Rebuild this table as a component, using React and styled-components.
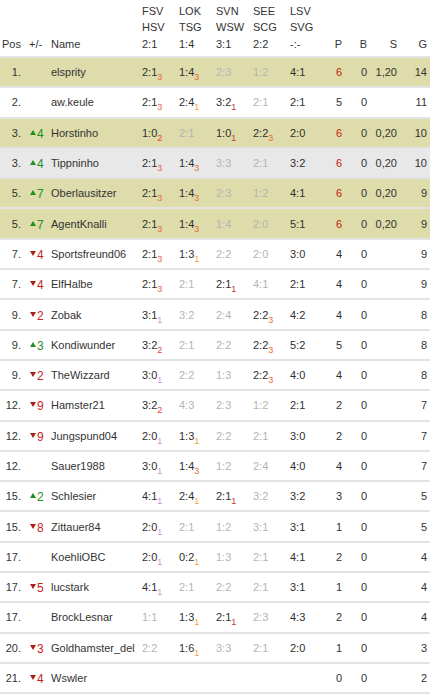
import React from "react";
import styled, { createGlobalStyle } from "styled-components";

const GlobalStyle = createGlobalStyle`
  body {
    margin: 0;
    background: #fff;
    font-family: "Liberation Sans", Arial, sans-serif;
    color: #333;
  }
`;

const games = [
  ["FSV", "HSV", "2:1"],
  ["LOK", "TSG", "1:4"],
  ["SVN", "WSW", "3:1"],
  ["SEE", "SCG", "2:2"],
  ["LSV", "SVG", "-:-"],
];

// "2:1|3" = tip with points, "2:3" = tip without points
const rows = [
  { pos: "1.", name: "elsprity", tips: ["2:1|3", "1:4|3", "2:3", "1:2", "4:1"], p: 6, b: 0, s: "1,20", g: 14, hl: "olive" },
  { pos: "2.", name: "aw.keule", tips: ["2:1|3", "2:4|1", "3:2|1", "2:1", "2:1"], p: 5, b: 0, s: "", g: 11 },
  { pos: "3.", trend: ["up", 4], name: "Horstinho", tips: ["1:0|2", "2:1", "1:0|1", "2:2|3", "2:0"], p: 6, b: 0, s: "0,20", g: 10, hl: "olive" },
  { pos: "3.", trend: ["up", 4], name: "Tippninho", tips: ["2:1|3", "1:4|3", "3:3", "2:1", "3:2"], p: 6, b: 0, s: "0,20", g: 10, hl: "grey" },
  { pos: "5.", trend: ["up", 7], name: "Oberlausitzer", tips: ["2:1|3", "1:4|3", "2:3", "1:2", "4:1"], p: 6, b: 0, s: "0,20", g: 9, hl: "olive" },
  { pos: "5.", trend: ["up", 7], name: "AgentKnalli", tips: ["2:1|3", "1:4|3", "1:4", "2:0", "5:1"], p: 6, b: 0, s: "0,20", g: 9, hl: "olive" },
  { pos: "7.", trend: ["down", 4], name: "Sportsfreund06", tips: ["2:1|3", "1:3|1", "2:2", "2:0", "3:0"], p: 4, b: 0, s: "", g: 9 },
  { pos: "7.", trend: ["down", 4], name: "ElfHalbe", tips: ["2:1|3", "2:1", "2:1|1", "4:1", "2:1"], p: 4, b: 0, s: "", g: 9 },
  { pos: "9.", trend: ["down", 2], name: "Zobak", tips: ["3:1|1", "3:2", "2:4", "2:2|3", "4:2"], p: 4, b: 0, s: "", g: 8 },
  { pos: "9.", trend: ["up", 3], name: "Kondiwunder", tips: ["3:2|2", "2:1", "2:2", "2:2|3", "5:2"], p: 5, b: 0, s: "", g: 8 },
  { pos: "9.", trend: ["down", 2], name: "TheWizzard", tips: ["3:0|1", "2:2", "1:3", "2:2|3", "4:0"], p: 4, b: 0, s: "", g: 8 },
  { pos: "12.", trend: ["down", 9], name: "Hamster21", tips: ["3:2|2", "4:3", "2:3", "1:2", "2:1"], p: 2, b: 0, s: "", g: 7 },
  { pos: "12.", trend: ["down", 9], name: "Jungspund04", tips: ["2:0|1", "1:3|1", "2:2", "2:1", "3:0"], p: 2, b: 0, s: "", g: 7 },
  { pos: "12.", name: "Sauer1988", tips: ["3:0|1", "1:4|3", "1:2", "2:4", "4:0"], p: 4, b: 0, s: "", g: 7 },
  { pos: "15.", trend: ["up", 2], name: "Schlesier", tips: ["4:1|1", "2:4|1", "2:1|1", "3:2", "3:2"], p: 3, b: 0, s: "", g: 5 },
  { pos: "15.", trend: ["down", 8], name: "Zittauer84", tips: ["2:0|1", "2:1", "1:2", "3:1", "3:1"], p: 1, b: 0, s: "", g: 5 },
  { pos: "17.", name: "KoehliOBC", tips: ["2:0|1", "0:2|1", "1:3", "2:1", "4:1"], p: 2, b: 0, s: "", g: 4 },
  { pos: "17.", trend: ["down", 5], name: "lucstark", tips: ["4:1|1", "2:1", "2:2", "2:1", "3:1"], p: 1, b: 0, s: "", g: 4 },
  { pos: "17.", name: "BrockLesnar", tips: ["1:1", "1:3|1", "2:1|1", "2:3", "4:3"], p: 2, b: 0, s: "", g: 4 },
  { pos: "20.", trend: ["down", 3], name: "Goldhamster_del", tips: ["2:2", "1:6|1", "3:3", "2:1", "2:0"], p: 1, b: 0, s: "", g: 3 },
  { pos: "21.", trend: ["down", 4], name: "Wswler", tips: ["", "", "", "", ""], p: 0, b: 0, s: "", g: 2 },
];

const subColor = (col, pts) => {
  if (pts === "3") return "#e66a42";
  if (pts === "2") return "#e23f36";
  return ["#d98ad6", "#f2a43c", "#c9392d"][col] || "#c9392d";
};

const rowBg = { olive: "#dddcaa", grey: "#e8e8e8" };

const Table = styled.table`
  width: 430px;
  border-collapse: collapse;
  table-layout: fixed;
  font-size: 11px;
`;

const Col = styled.col`
  width: ${(p) => p.$w}px;
`;

const HeadCell = styled.th`
  height: 52px;
  padding: 0 ${(p) => (p.$right ? "3px" : "0")} 4px ${(p) => p.$pl || 0}px;
  font-weight: normal;
  text-align: ${(p) => (p.$right ? "right" : "left")};
  vertical-align: bottom;
  line-height: 16.5px;
  white-space: nowrap;
`;

const Row = styled.tr`
  height: 30.3px;
  border-top: 2px solid #e3e3e3;
  border-bottom: 2px solid #e3e3e3;
  background: ${(p) => rowBg[p.$hl] || "#fff"};
`;

const Cell = styled.td`
  padding: 0 ${(p) => (p.$right ? "3px" : "0")} 0 ${(p) => p.$pl || 0}px;
  text-align: ${(p) => (p.$right ? "right" : "left")};
  white-space: nowrap;
  overflow: visible;
  color: ${(p) => p.$color || "#333"};
`;

const Tip = styled.span`
  color: ${(p) => (p.$muted ? "#b4b4b4" : "#2f2f2f")};
`;

const Sub = styled.sub`
  font-size: 9px;
  vertical-align: -4px;
  line-height: 0;
  color: ${(p) => p.$color};
`;

const Trend = styled.span`
  display: inline-flex;
  align-items: flex-start;
  color: ${(p) => (p.$up ? "#1f8f1f" : "#c8241c")};
  font-size: 12px;
`;

const Arrow = styled.span`
  width: 0;
  height: 0;
  margin: 3px 1px 0 0;
  border-left: 3px solid transparent;
  border-right: 3px solid transparent;
  ${(p) =>
    p.$up
      ? "border-bottom: 5px solid #1f8f1f;"
      : "border-top: 5px solid #a8201a;"}
`;

const TipCell = ({ tip, col }) => {
  if (!tip) return <Cell $pl={3} />;
  const [score, pts] = tip.split("|");
  const open = col === 4;
  return (
    <Cell $pl={3}>
      <Tip $muted={!pts && !open}>{score}</Tip>
      {pts && <Sub $color={subColor(col, pts)}>{pts}</Sub>}
    </Cell>
  );
};

const App = () => {
  return (
    <>
      <GlobalStyle />
      <Table>
        <colgroup>
          <Col $w={24} />
          <Col $w={24} />
          <Col $w={91} />
          <Col $w={37} />
          <Col $w={37} />
          <Col $w={37} />
          <Col $w={37} />
          <Col $w={37} />
          <Col $w={21} />
          <Col $w={25} />
          <Col $w={30} />
          <Col $w={30} />
        </colgroup>
        <thead>
          <tr>
            <HeadCell $pl={2}>Pos</HeadCell>
            <HeadCell $pl={5}>+/-</HeadCell>
            <HeadCell $pl={3}>Name</HeadCell>
            {games.map(([home, away, result]) => (
              <HeadCell key={home} $pl={3}>
                {home}
                <br />
                {away}
                <br />
                {result}
              </HeadCell>
            ))}
            <HeadCell $right>P</HeadCell>
            <HeadCell $right>B</HeadCell>
            <HeadCell $right>S</HeadCell>
            <HeadCell $right>G</HeadCell>
          </tr>
        </thead>
        <tbody>
          {rows.map((r) => (
            <Row key={r.name} $hl={r.hl}>
              <Cell $right>{r.pos}</Cell>
              <Cell $pl={6}>
                {r.trend && (
                  <Trend $up={r.trend[0] === "up"}>
                    <Arrow $up={r.trend[0] === "up"} />
                    {r.trend[1]}
                  </Trend>
                )}
              </Cell>
              <Cell $pl={3}>{r.name}</Cell>
              {r.tips.map((t, i) => (
                <TipCell key={i} tip={t} col={i} />
              ))}
              <Cell $right $color={r.p === 6 ? "#c4200c" : "#2f2f2f"}>
                {r.p}
              </Cell>
              <Cell $right>{r.b}</Cell>
              <Cell $right>{r.s}</Cell>
              <Cell $right>{r.g}</Cell>
            </Row>
          ))}
        </tbody>
      </Table>
    </>
  );
};

export default App;
